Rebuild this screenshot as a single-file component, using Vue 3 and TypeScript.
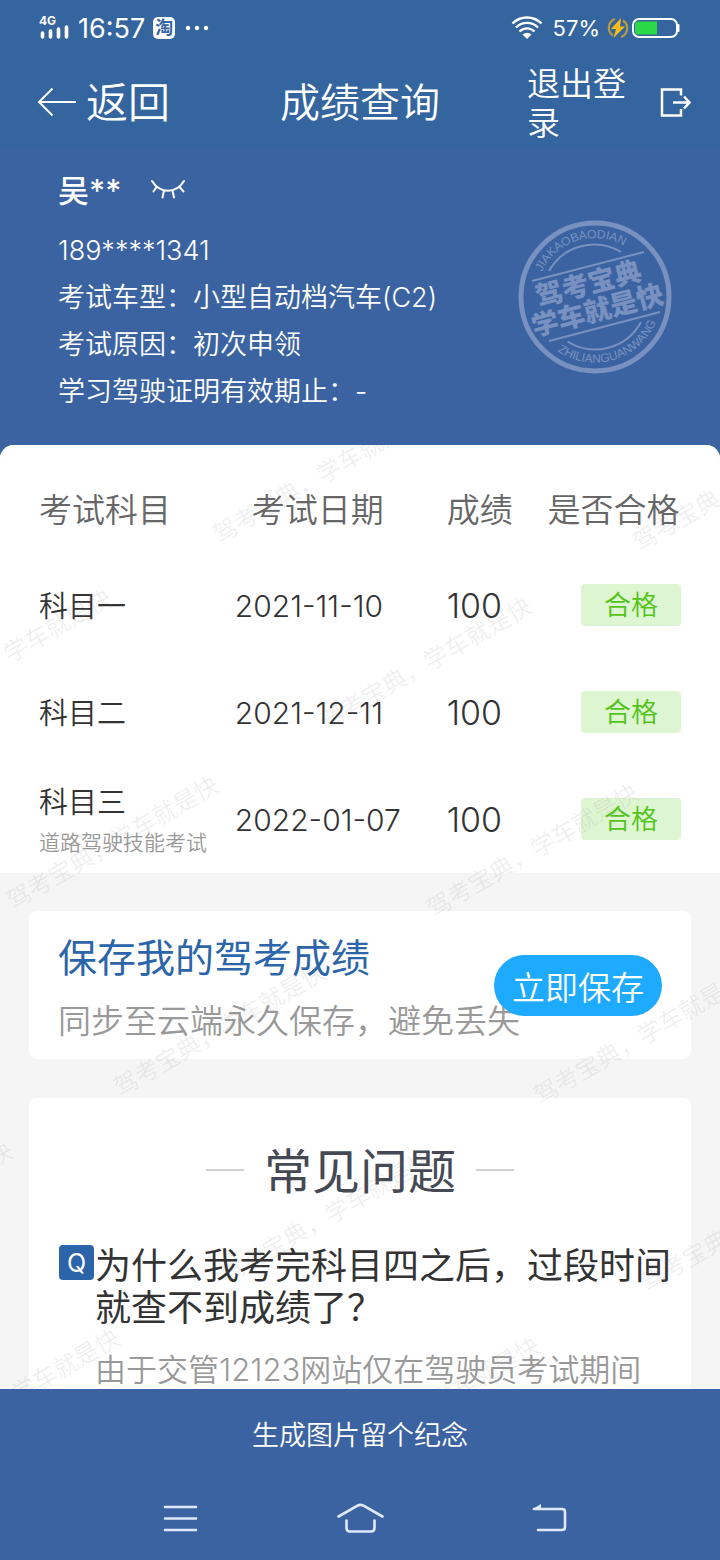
<script setup lang="ts">
interface ExamRow {
  subject: string
  note?: string
  date: string
  score: number
  result: string
}

interface Mark {
  x: number
  y: number
}

const details: string[] = [
  '189****1341',
  '考试车型：小型自动档汽车(C2)',
  '考试原因：初次申领',
  '学习驾驶证明有效期止：-',
]

const rows: ExamRow[] = [
  { subject: '科目一', date: '2021-11-10', score: 100, result: '合格' },
  { subject: '科目二', date: '2021-12-11', score: 100, result: '合格' },
  { subject: '科目三', note: '道路驾驶技能考试', date: '2022-01-07', score: 100, result: '合格' },
]

// Staggered grid of slanted brand marks; each row is shifted sideways from the one above.
const marks: Mark[] = []
for (let row = 0; row < 6; row++) {
  for (let col = -2; col < 2; col++) {
    const x = 219 + row * 107 + col * 420
    if (x > -210 && x < 710) marks.push({ x, y: 99 + row * 187 + col * 8 })
  }
}
</script>

<template>
  <div class="app">
    <header class="top">
      <div class="status">
        <svg class="signal" width="32" height="28" viewBox="0 0 32 28" aria-label="4G">
          <text x="0" y="11" class="net">4G</text>
          <path d="M3.500 19v4M11.500 17v6M19.500 15v8M27.500 13v10" stroke="#fff" stroke-width="3.600" stroke-linecap="round" fill="none" />
        </svg>
        <span class="clock">16:57</span>
        <span class="tao">淘</span>
        <svg width="24" height="6" viewBox="0 0 24 6" aria-hidden="true">
          <circle cx="3" cy="3" r="2.200" fill="#fff" /><circle cx="12" cy="3" r="2.200" fill="#fff" /><circle cx="21" cy="3" r="2.200" fill="#fff" />
        </svg>
        <span class="spacer"></span>
        <svg width="32" height="24" viewBox="0 0 32 24" fill="none" stroke="#fff" stroke-width="2.400" aria-hidden="true">
          <path d="M1.500 7.500a20.500 20.500 0 0 1 29 0" />
          <path d="M5 11.500a15.500 15.500 0 0 1 22 0" />
          <path d="M8.500 15.500a10.500 10.500 0 0 1 15 0" />
          <path d="M11.500 18.500a6.500 6.500 0 0 1 9 0L16 23z" fill="#fff" stroke="none" />
        </svg>
        <span class="percent">57%</span>
        <svg width="22" height="22" viewBox="0 0 22 22" aria-hidden="true">
          <path d="M8 2a9.300 9.300 0 0 0-2 16.500M14 20a9.300 9.300 0 0 0 2-16.500" fill="none" stroke="#b99a3c" stroke-width="2.200" />
          <path d="M14 1L4 12h5l-2.500 9L18 9.500h-5z" fill="#fdbb14" />
        </svg>
        <svg class="battery" width="49" height="22" viewBox="0 0 49 22" aria-hidden="true">
          <rect x="1" y="2" width="44" height="18" rx="6" fill="none" stroke="#fff" stroke-width="2" />
          <path d="M6 4.500h19v13H6a3 3 0 0 1-3-3v-7a3 3 0 0 1 3-3z" fill="#2bd948" />
          <path d="M46.500 8v6" stroke="#fff" stroke-width="2" stroke-linecap="round" />
        </svg>
      </div>
      <nav class="bar">
        <button class="back" type="button">
          <svg width="40" height="30" viewBox="0 0 40 30" fill="none" stroke="#fff" stroke-width="2" aria-hidden="true">
            <path d="M39 14H2M15.500 0.500L2 14l13.500 13.500" />
          </svg>
          <span>返回</span>
        </button>
        <h1 class="title">成绩查询</h1>
        <button class="logout" type="button">
          <span class="logout-text">退出登录</span>
          <svg width="32" height="30" viewBox="0 0 32 30" fill="none" stroke="#fff" stroke-width="2.500" aria-hidden="true">
            <path d="M22 7.500V1.500H3v26h19v-6.500M14 14.500h16M25 8.500l5.500 6-5.500 6" />
          </svg>
        </button>
      </nav>
    </header>

    <section class="profile">
      <div class="name-row">
        <span class="name">吴**</span>
        <button class="eye" type="button" aria-label="显示姓名">
          <svg width="36" height="22" viewBox="0 0 36 22" fill="none" stroke="#fff" stroke-width="2" stroke-linecap="round">
            <path d="M1 3C9 16 25 16 33 3M5.500 9L2.500 13.500M13 12.500l-1.500 7M21.500 12.500l1.500 7M28.500 9l4 4.500" />
          </svg>
        </button>
      </div>
      <p v-for="line in details" :key="line" class="detail">{{ line }}</p>

      <svg class="stamp" width="156" height="156" viewBox="0 0 156 156" aria-hidden="true">
        <defs>
          <path id="arc-top" d="M27.600 107.700A58.500 58.500 0 1 1 130 104" />
          <path id="arc-bottom" d="M40.300 131.900A66 66 0 0 0 144 78" />
        </defs>
        <circle cx="78" cy="78" r="74" fill="none" stroke="currentColor" stroke-width="5" />
        <g fill="none" stroke="currentColor" stroke-width="2">
          <path d="M32 52A52 52 0 0 1 104 33" />
          <path d="M50.500 122.500A52 52 0 0 0 124 103" />
          <path d="M15 62l112-29M32 122l111-29" />
        </g>
        <g fill="currentColor">
          <text class="stamp-latin"><textPath href="#arc-top" startOffset="57">JIAKAOBAODIAN</textPath></text>
          <text class="stamp-latin"><textPath href="#arc-bottom">ZHILIANGUANWANG</textPath></text>
          <g transform="rotate(-14.500 78 78)" class="stamp-cn">
            <text x="75" y="73">驾考宝典</text>
            <text x="77" y="101">学车就是快</text>
          </g>
        </g>
      </svg>
    </section>

    <main class="content">
      <section class="sheet">
        <table class="scores">
          <colgroup>
            <col class="c-subject" /><col class="c-date" /><col class="c-score" /><col class="c-result" />
          </colgroup>
          <thead>
            <tr>
              <th scope="col">考试科目</th>
              <th scope="col" class="date-head">考试日期</th>
              <th scope="col">成绩</th>
              <th scope="col">是否合格</th>
            </tr>
          </thead>
          <tbody>
            <tr v-for="row in rows" :key="row.subject">
              <td class="subject">
                {{ row.subject }}
                <small v-if="row.note">{{ row.note }}</small>
              </td>
              <td class="date">{{ row.date }}</td>
              <td class="score">{{ row.score }}</td>
              <td class="result"><span class="pill">{{ row.result }}</span></td>
            </tr>
          </tbody>
        </table>
      </section>

      <section class="card save">
        <h2>保存我的驾考成绩</h2>
        <p>同步至云端永久保存，避免丢失</p>
        <button class="save-btn" type="button">立即保存</button>
      </section>

      <section class="card faq">
        <h2>常见问题</h2>
        <div class="question">
          <span class="q">Q</span>
          <h3>为什么我考完科目四之后，过段时间就查不到成绩了？</h3>
        </div>
        <p class="answer">由于交管12123网站仅在驾驶员考试期间</p>
      </section>

      <svg class="watermark" aria-hidden="true">
        <text v-for="m in marks" :key="`${m.x}:${m.y}`" :transform="`translate(${m.x} ${m.y}) rotate(-30)`">驾考宝典，学车就是快</text>
      </svg>
    </main>

    <footer class="bottom">
      <button class="generate" type="button">生成图片留个纪念</button>
      <nav class="system">
        <button type="button" aria-label="菜单">
          <svg width="60" height="32" viewBox="-6 0 60 32" fill="none" stroke="#dfe9fb" stroke-width="2.600" stroke-linecap="round">
            <path d="M9 4h31M9 15.500h31M9 27h31" />
          </svg>
        </button>
        <button type="button" aria-label="主屏幕">
          <svg width="60" height="32" viewBox="-6 0 60 32" fill="none" stroke="#dfe9fb" stroke-width="2.600" stroke-linecap="round">
            <path d="M2.500 13.500L21.500 2.700q3-1.600 6 0l19 10.800M10.500 17.500v7.500q0 3.500 3.500 3.500h21q3.500 0 3.500-3.500v-7.500" />
          </svg>
        </button>
        <button type="button" aria-label="返回">
          <svg width="60" height="32" viewBox="-16 0 60 32" fill="none" stroke="#dfe9fb" stroke-width="2.600" stroke-linecap="round">
            <path d="M8 6h28q3 0 3 3v15q0 3-3 3H12" />
            <path d="M6 6.500l9-5.500v5.500z" fill="#dfe9fb" stroke="none" />
          </svg>
        </button>
      </nav>
    </footer>
  </div>
</template>

<style>
html,
body {
  margin: 0;
  background: #3b63a1;
}
</style>

<style scoped>
.app {
  display: flex;
  flex-direction: column;
  height: 100vh;
  overflow: hidden;
  font-family: Inter, "Noto Sans CJK SC", sans-serif;
  font-weight: 350;
  color: #333;
  background: #3b63a1;
}

h1,
h2,
h3,
p {
  margin: 0;
  font-weight: inherit;
}

button {
  padding: 0;
  border: 0;
  background: none;
  color: inherit;
  font: inherit;
  cursor: pointer;
}

svg {
  display: block;
  flex: none;
}

.top {
  background: #34659f;
  color: #fff;
}

.status {
  display: flex;
  align-items: center;
  height: 56px;
  padding: 0 39px;
  font-weight: 400;
}

.net {
  font: 700 12px Inter, sans-serif;
  fill: #fff;
}

.clock {
  margin: 0 8px 0 7px;
  font-size: 27px;
}

.tao {
  width: 22px;
  height: 22px;
  margin-right: 10px;
  border-radius: 5px;
  background: #fff;
  color: #34659f;
  font-size: 18px;
  font-weight: 700;
  line-height: 22px;
  text-align: center;
}

.spacer {
  flex: 1;
}

.percent {
  margin: 0 7px 0 10px;
  font-size: 22px;
}

.battery {
  margin-left: 3px;
}

.bar {
  display: grid;
  grid-template-columns: 1fr auto 1fr;
  align-items: center;
  height: 93px;
  padding: 0 29px;
}

.back {
  display: flex;
  align-items: center;
  gap: 9px;
  padding-left: 8px;
  font-size: 42px;
  line-height: 60px;
}

.title {
  font-size: 40px;
  line-height: 60px;
}

.logout {
  display: flex;
  align-items: center;
  justify-self: end;
  gap: 30px;
}

.logout-text {
  width: 102px;
  padding-top: 2px;
  font-size: 33px;
  line-height: 39px;
  text-align: left;
}

.profile {
  position: relative;
  height: 296px;
  box-sizing: border-box;
  padding: 16px 58px 0;
  color: #fff;
}

.name-row {
  display: flex;
  align-items: center;
  gap: 30px;
  height: 47px;
  margin-bottom: 15px;
}

.name {
  font-size: 31px;
  font-weight: 500;
}

.detail {
  font-size: 27px;
  line-height: 47px;
}

.stamp {
  position: absolute;
  top: 70px;
  right: 47px;
  color: #7891c0;
}

.stamp-latin {
  font: 400 12px "Liberation Sans", sans-serif;
}

.stamp-cn {
  font: 900 27px "Noto Sans CJK SC", sans-serif;
  text-anchor: middle;
}

.content {
  position: relative;
  flex: 1;
  min-height: 0;
  overflow: hidden;
  border-radius: 14px 14px 0 0;
  background: #f5f5f5;
}

.sheet {
  padding: 0 39px;
  background: #fff;
}

.scores {
  width: 100%;
  table-layout: fixed;
  border-collapse: collapse;
}

.c-subject {
  width: 30.5%;
}

.c-date {
  width: 33%;
}

.c-score {
  width: 15.7%;
}

th,
td {
  height: 107px;
  padding: 3px 0 0;
  box-sizing: border-box;
  text-align: left;
  font-weight: inherit;
  white-space: nowrap;
}

th {
  padding-top: 19px;
  color: #666;
  font-size: 33px;
}

.date-head {
  padding-left: 17px;
}

.subject {
  font-size: 29px;
  line-height: 40px;
}

.subject small {
  display: block;
  margin-bottom: -4px;
  color: #999;
  font-size: 21px;
}

.date {
  padding-top: 0;
  font-size: 30px;
}

.score {
  padding-top: 0;
  font-size: 34px;
}

.result {
  padding: 0 0 2px;
}

.pill {
  display: block;
  width: 100px;
  margin-left: auto;
  padding-top: 2px;
  border-radius: 4px;
  background: #def5d1;
  color: #52c41a;
  font-size: 27px;
  line-height: 40px;
  text-align: center;
}

.card {
  position: relative;
  margin: 38px 29px 0;
  border-radius: 8px;
  background: #fff;
}

.save {
  padding: 19px 29px 13px;
}

.save h2 {
  color: #2c65a9;
  font-size: 39px;
  font-weight: 400;
  line-height: 56px;
}

.save p {
  margin-top: 10px;
  color: #999;
  font-size: 33px;
  line-height: 50px;
}

.save-btn {
  position: absolute;
  top: 44px;
  right: 29px;
  width: 168px;
  height: 61px;
  border-radius: 31px;
  background: #1eaaff;
  color: #fff;
  font-size: 33px;
}

.faq {
  margin-top: 39px;
  padding: 39px 18px 0 30px;
}

.faq h2 {
  display: flex;
  align-items: center;
  justify-content: center;
  gap: 20px;
  margin-right: 12px;
  color: #444953;
  font-size: 48px;
  font-weight: 400;
  line-height: 70px;
}

.faq h2::before,
.faq h2::after {
  width: 38px;
  height: 2px;
  margin-bottom: 4px;
  background: #d0d1d4;
  content: "";
}

.question {
  display: flex;
  gap: 1px;
  margin-top: 38px;
}

.q {
  flex: none;
  width: 35px;
  height: 35px;
  border-radius: 4px;
  background: #2b64a8;
  color: #fff;
  font-size: 25px;
  font-weight: 400;
  line-height: 36px;
  text-align: center;
}

.question h3 {
  flex: 1;
  font-size: 36px;
  font-weight: 400;
  line-height: 42px;
}

.answer {
  margin: 18px 0 0 36px;
  color: #999;
  font-size: 31px;
  line-height: 46px;
}

.watermark {
  position: absolute;
  inset: 0;
  width: 100%;
  height: 100%;
  pointer-events: none;
  fill: rgba(120, 125, 130, 0.13);
  font-size: 24px;
}

.bottom {
  color: #fff;
  background: #3b63a1;
}

.generate {
  display: block;
  width: 100%;
  height: 88px;
  font-size: 27px;
}

.system {
  display: flex;
  justify-content: space-between;
  height: 83px;
  padding: 0 150px;
}
</style>
